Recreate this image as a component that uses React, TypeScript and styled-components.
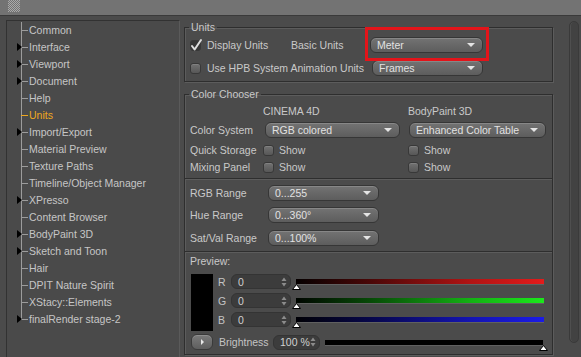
import React from "react";
import styled, { createGlobalStyle } from "styled-components";

const Global = createGlobalStyle`
  html, body { margin: 0; padding: 0; background: #4b4b4b; }
  body {
    width: 581px; height: 357px; overflow: hidden;
    font-family: "Liberation Sans", Arial, sans-serif;
    font-size: 10.5px; color: #c9c9c9;
  }
  * { box-sizing: border-box; }
`;

const Window = styled.div`
  width: 581px; height: 357px;
  display: flex; flex-direction: column;
  background: #4b4b4b;
`;

const TopBar = styled.div`
  height: 16px; flex: none;
  background: #737373;
  border-bottom: 1px solid #3a3a3a;
  padding-left: 8px;
`;

const Grip = styled.div`
  width: 12px; height: 12px;
  background-image: repeating-conic-gradient(#b4b4b4 0 25%, transparent 0 50%);
  background-size: 2px 2px;
  opacity: 0.85;
`;

const Body = styled.div`
  flex: 1; display: flex; min-height: 0;
`;

const TreePanel = styled.div`
  width: 174px;
  margin: 4px 0 0 6px;
  border: 1px solid #323232;
  border-right-color: #5a5a5a;
  border-bottom: none;
  background: #4a4a4a;
  padding-top: 1px;
`;

const TreeItem = styled.div<{ $active?: boolean; $last?: boolean }>`
  position: relative;
  height: 17px; line-height: 17px;
  padding-left: 22px;
  white-space: nowrap;
  color: ${(p) => (p.$active ? "#f0a81e" : "#c6c6c6")};
  &::before {
    content: "";
    position: absolute; left: 14px; top: 0;
    bottom: ${(p) => (p.$last ? "8px" : "0")};
    border-left: 1px solid #9c9c9c;
  }
  &::after {
    content: "";
    position: absolute; left: 14px; top: 8px; width: 7px;
    border-top: 1px solid ${(p) => (p.$active ? "#f0a81e" : "#9c9c9c")};
  }
`;

const Expander = styled.span`
  position: absolute; left: 10px; top: 4px; z-index: 1;
  width: 0; height: 0;
  border-left: 5px solid #000;
  border-top: 4px solid transparent;
  border-bottom: 4px solid transparent;
`;

const Content = styled.div`
  width: 369px; margin-left: 4px;
  display: flex; flex-direction: column;
`;

const ScrollArea = styled.div`
  width: 10px; height: 322px;
  margin: 5px 0 0 16px;
  border-radius: 5px;
  background: #424242;
  border: 1px solid #3a3a3a;
  box-shadow: inset 1px 0 0 #4f4f4f;
`;

const UnitsWrap = styled.div`
  position: relative;
  margin-top: 5px;
`;

const Group = styled.fieldset<{ $mt?: number }>`
  margin: ${(p) => p.$mt ?? 0}px 0 0 0;
  padding: 0;
  min-width: 0;
  border: 1px solid #2e2e2e;
  box-shadow: 1px 1px 0 #5c5c5c, inset 1px 1px 0 #5c5c5c;
`;

const Legend = styled.legend`
  padding: 0 2px;
  margin-left: 4px;
  height: 12px; line-height: 12px;
  color: #c9c9c9;
`;

const Highlight = styled.div`
  position: absolute;
  left: 181px; top: 6px;
  width: 124px; height: 34px;
  border: 3px solid #e3141a;
  pointer-events: none;
`;

const UnitsGrid = styled.div`
  display: grid;
  grid-template-columns: 101px 79px 113px;
  grid-template-rows: 18px 18px;
  row-gap: 5px;
  align-items: center;
  padding: 3px 0 4px 5px;
`;

const CheckLabel = styled.label<{ $span?: number }>`
  display: flex; align-items: center; gap: 6px;
  white-space: nowrap;
  grid-column: span ${(p) => p.$span ?? 1};
`;

const Box = styled.span<{ $checked?: boolean }>`
  position: relative;
  flex: none;
  width: 11px; height: 11px;
  border-radius: 3px;
  border: 1px solid #383838;
  background: ${(p) =>
    p.$checked ? "#353535" : "linear-gradient(#727272, #575757)"};
  box-shadow: ${(p) => (p.$checked ? "none" : "inset 0 1px 0 #808080")};
  svg { position: absolute; left: -1px; top: -3px; }
`;

const Check = ({ checked }: { checked?: boolean }) => (
  <Box $checked={checked}>
    {checked && (
      <svg width="13" height="14" viewBox="0 0 13 14">
        <path d="M2 8 L4.6 11.5 L11 2" fill="none" stroke="#dcdcdc" strokeWidth="2" strokeLinecap="round" strokeLinejoin="round" />
      </svg>
    )}
  </Box>
);

const Select = styled.div<{ $w: number; $ml?: number }>`
  width: ${(p) => p.$w}px; height: 16px;
  margin-left: ${(p) => p.$ml ?? 0}px;
  border-radius: 6px;
  border: 1px solid #363636;
  background: linear-gradient(#737373, #5d5d5d);
  box-shadow: inset 0 1px 0 #878787;
  color: #e2e2e2;
  display: flex; align-items: center; justify-content: space-between;
  padding: 0 7px 0 6px;
  white-space: nowrap;
`;

const Caret = styled.span`
  width: 0; height: 0;
  border-left: 4px solid transparent;
  border-right: 4px solid transparent;
  border-top: 4px solid #e4e4e4;
`;

const Dropdown = ({ w, ml, children }: { w: number; ml?: number; children: React.ReactNode }) => (
  <Select $w={w} $ml={ml}>
    <span>{children}</span>
    <Caret />
  </Select>
);

const Section = styled.div<{ $pt: number; $pb: number; $sep?: boolean }>`
  padding: ${(p) => p.$pt}px 0 ${(p) => p.$pb}px 5px;
  display: flex; flex-direction: column;
  ${(p) =>
    p.$sep
      ? "border-top: 1px solid #2e2e2e; box-shadow: inset 0 1px 0 #5c5c5c;"
      : ""}
`;

const ChooserRow = styled.div<{ $mt?: number }>`
  display: grid;
  grid-template-columns: 73px 145px 137px;
  height: 16px;
  margin-top: ${(p) => p.$mt ?? 0}px;
  align-items: center;
  white-space: nowrap;
`;

const ShowCell = styled.div`
  display: flex; align-items: center; gap: 5px;
`;

const RangeRow = styled.div<{ $mt?: number }>`
  display: grid;
  grid-template-columns: 78px 111px;
  height: 16px;
  margin-top: ${(p) => p.$mt ?? 0}px;
  align-items: center;
`;

const PreviewTitle = styled.div`
  height: 12px; line-height: 12px;
`;

const ChannelGrid = styled.div`
  margin-top: 7px;
  display: grid;
  grid-template-columns: 23px 18px 60px 253px;
  grid-template-rows: 15px 15px 15px;
  row-gap: 4px;
  align-items: center;
`;

const Swatch = styled.div`
  grid-row: 1 / span 3;
  align-self: start;
  margin-left: 1px;
  width: 22px; height: 57px;
  background: #000;
`;

const ChanLabel = styled.span`
  padding-left: 5px;
  color: #c4c4c4;
`;

const SpinBox = styled.div<{ $w: number }>`
  width: ${(p) => p.$w}px; height: 15px;
  border-radius: 6px;
  background: #3c3c3c;
  border: 1px solid #343434;
  color: #d0d0d0;
  display: flex; align-items: center; justify-content: space-between;
  padding: 0 3px 0 6px;
`;

const Spinner = ({ w, children }: { w: number; children: React.ReactNode }) => (
  <SpinBox $w={w}>
    <span>{children}</span>
    <svg width="6" height="10" viewBox="0 0 6 10">
      <polygon points="3,0.5 5.5,4 0.5,4" fill="#8c8c8c" />
      <polygon points="0.5,6 5.5,6 3,9.5" fill="#8c8c8c" />
    </svg>
  </SpinBox>
);

const Track = styled.div<{ $w: number; $ml: number }>`
  position: relative;
  margin-left: ${(p) => p.$ml}px;
  width: ${(p) => p.$w}px; height: 15px;
`;

const Bar = styled.div<{ $fill: string }>`
  position: absolute; left: 0; right: 0; top: 5px;
  height: 5px;
  background: ${(p) => p.$fill};
  box-shadow: 0 1px 0 rgba(255, 255, 255, 0.12);
`;

const Marker = styled.svg<{ $right?: boolean }>`
  position: absolute; top: 10px;
  ${(p) => (p.$right ? "right: -5px;" : "left: -4px;")}
`;

const SliderTrack = ({ fill, w, ml, right }: { fill: string; w: number; ml: number; right?: boolean }) => (
  <Track $w={w} $ml={ml}>
    <Bar $fill={fill} />
    <Marker $right={right} width="9" height="6" viewBox="0 0 9 6">
      <polygon points="4.5,0.5 8.5,5.5 0.5,5.5" fill="#fff" stroke="#000" strokeWidth="1" />
    </Marker>
  </Track>
);

const BrightRow = styled.div`
  margin-top: 7px;
  height: 16px;
  display: flex; align-items: center;
`;

const RoundButton = styled.div`
  margin-left: 1px;
  width: 22px; height: 16px;
  border-radius: 6px;
  border: 1px solid #3a3a3a;
  background: linear-gradient(#7b7b7b, #5e5e5e);
  box-shadow: inset 0 1px 0 #8e8e8e;
  display: flex; align-items: center; justify-content: center;
`;

const PlayGlyph = styled.span`
  width: 0; height: 0;
  border-left: 3px solid #e8e8e8;
  border-top: 3px solid transparent;
  border-bottom: 3px solid transparent;
`;

const BrightLabel = styled.span`
  width: 54px; margin-left: 6px;
  color: #c4c4c4;
`;

const tree: { label: string; arrow?: boolean; active?: boolean }[] = [
  { label: "Common" },
  { label: "Interface", arrow: true },
  { label: "Viewport", arrow: true },
  { label: "Document", arrow: true },
  { label: "Help" },
  { label: "Units", active: true },
  { label: "Import/Export", arrow: true },
  { label: "Material Preview" },
  { label: "Texture Paths" },
  { label: "Timeline/Object Manager" },
  { label: "XPresso", arrow: true },
  { label: "Content Browser" },
  { label: "BodyPaint 3D", arrow: true },
  { label: "Sketch and Toon", arrow: true },
  { label: "Hair" },
  { label: "DPIT Nature Spirit" },
  { label: "XStacy::Elements" },
  { label: "finalRender stage-2", arrow: true },
];

const channels = [
  { key: "R", fill: "linear-gradient(90deg, #050000 0%, #4a0707 30%, #b01414 70%, #e31b1b 100%)" },
  { key: "G", fill: "linear-gradient(90deg, #000500 0%, #074a07 30%, #14b014 70%, #1be81b 100%)" },
  { key: "B", fill: "linear-gradient(90deg, #000005 0%, #07074a 30%, #1414b0 70%, #1b1be6 100%)" },
];

export default function App() {
  return (
    <Window>
      <Global />
      <TopBar>
        <Grip />
      </TopBar>
      <Body>
        <TreePanel>
          {tree.map((t, i) => (
            <TreeItem key={t.label} $active={t.active} $last={i === tree.length - 1}>
              {t.arrow && <Expander />}
              {t.label}
            </TreeItem>
          ))}
        </TreePanel>
        <Content>
          <UnitsWrap>
            <Group>
              <Legend>Units</Legend>
              <UnitsGrid>
                <CheckLabel>
                  <Check checked />
                  Display Units
                </CheckLabel>
                <span>Basic Units</span>
                <Dropdown w={113}>Meter</Dropdown>
                <CheckLabel $span={2}>
                  <Check />
                  Use HPB System Animation Units
                </CheckLabel>
                <Dropdown w={111} ml={2}>Frames</Dropdown>
              </UnitsGrid>
            </Group>
            <Highlight />
          </UnitsWrap>
          <Group $mt={6}>
            <Legend>Color Chooser</Legend>
            <Section $pt={3} $pb={3}>
              <ChooserRow>
                <span />
                <span>CINEMA 4D</span>
                <span>BodyPaint 3D</span>
              </ChooserRow>
              <ChooserRow $mt={3}>
                <span>Color System</span>
                <Dropdown w={135} ml={2}>RGB colored</Dropdown>
                <Dropdown w={137} ml={1}>Enhanced Color Table</Dropdown>
              </ChooserRow>
              <ChooserRow $mt={4}>
                <span>Quick Storage</span>
                <ShowCell><Check />Show</ShowCell>
                <ShowCell><Check />Show</ShowCell>
              </ChooserRow>
              <ChooserRow $mt={1}>
                <span>Mixing Panel</span>
                <ShowCell><Check />Show</ShowCell>
                <ShowCell><Check />Show</ShowCell>
              </ChooserRow>
            </Section>
            <Section $pt={6} $pb={5} $sep>
              <RangeRow>
                <span>RGB Range</span>
                <Dropdown w={111}>0...255</Dropdown>
              </RangeRow>
              <RangeRow $mt={6}>
                <span>Hue Range</span>
                <Dropdown w={111}>0...360°</Dropdown>
              </RangeRow>
              <RangeRow $mt={7}>
                <span>Sat/Val Range</span>
                <Dropdown w={111}>0...100%</Dropdown>
              </RangeRow>
            </Section>
            <Section $pt={3} $pb={4} $sep>
              <PreviewTitle>Preview:</PreviewTitle>
              <ChannelGrid>
                <Swatch />
                {channels.map((c) => (
                  <React.Fragment key={c.key}>
                    <ChanLabel>{c.key}</ChanLabel>
                    <Spinner w={60}>0</Spinner>
                    <SliderTrack fill={c.fill} w={248} ml={5} />
                  </React.Fragment>
                ))}
              </ChannelGrid>
              <BrightRow>
                <RoundButton>
                  <PlayGlyph />
                </RoundButton>
                <BrightLabel>Brightness</BrightLabel>
                <Spinner w={47}>100 %</Spinner>
                <SliderTrack fill="#000" w={218} ml={5} right />
              </BrightRow>
            </Section>
          </Group>
        </Content>
        <ScrollArea />
      </Body>
    </Window>
  );
}
